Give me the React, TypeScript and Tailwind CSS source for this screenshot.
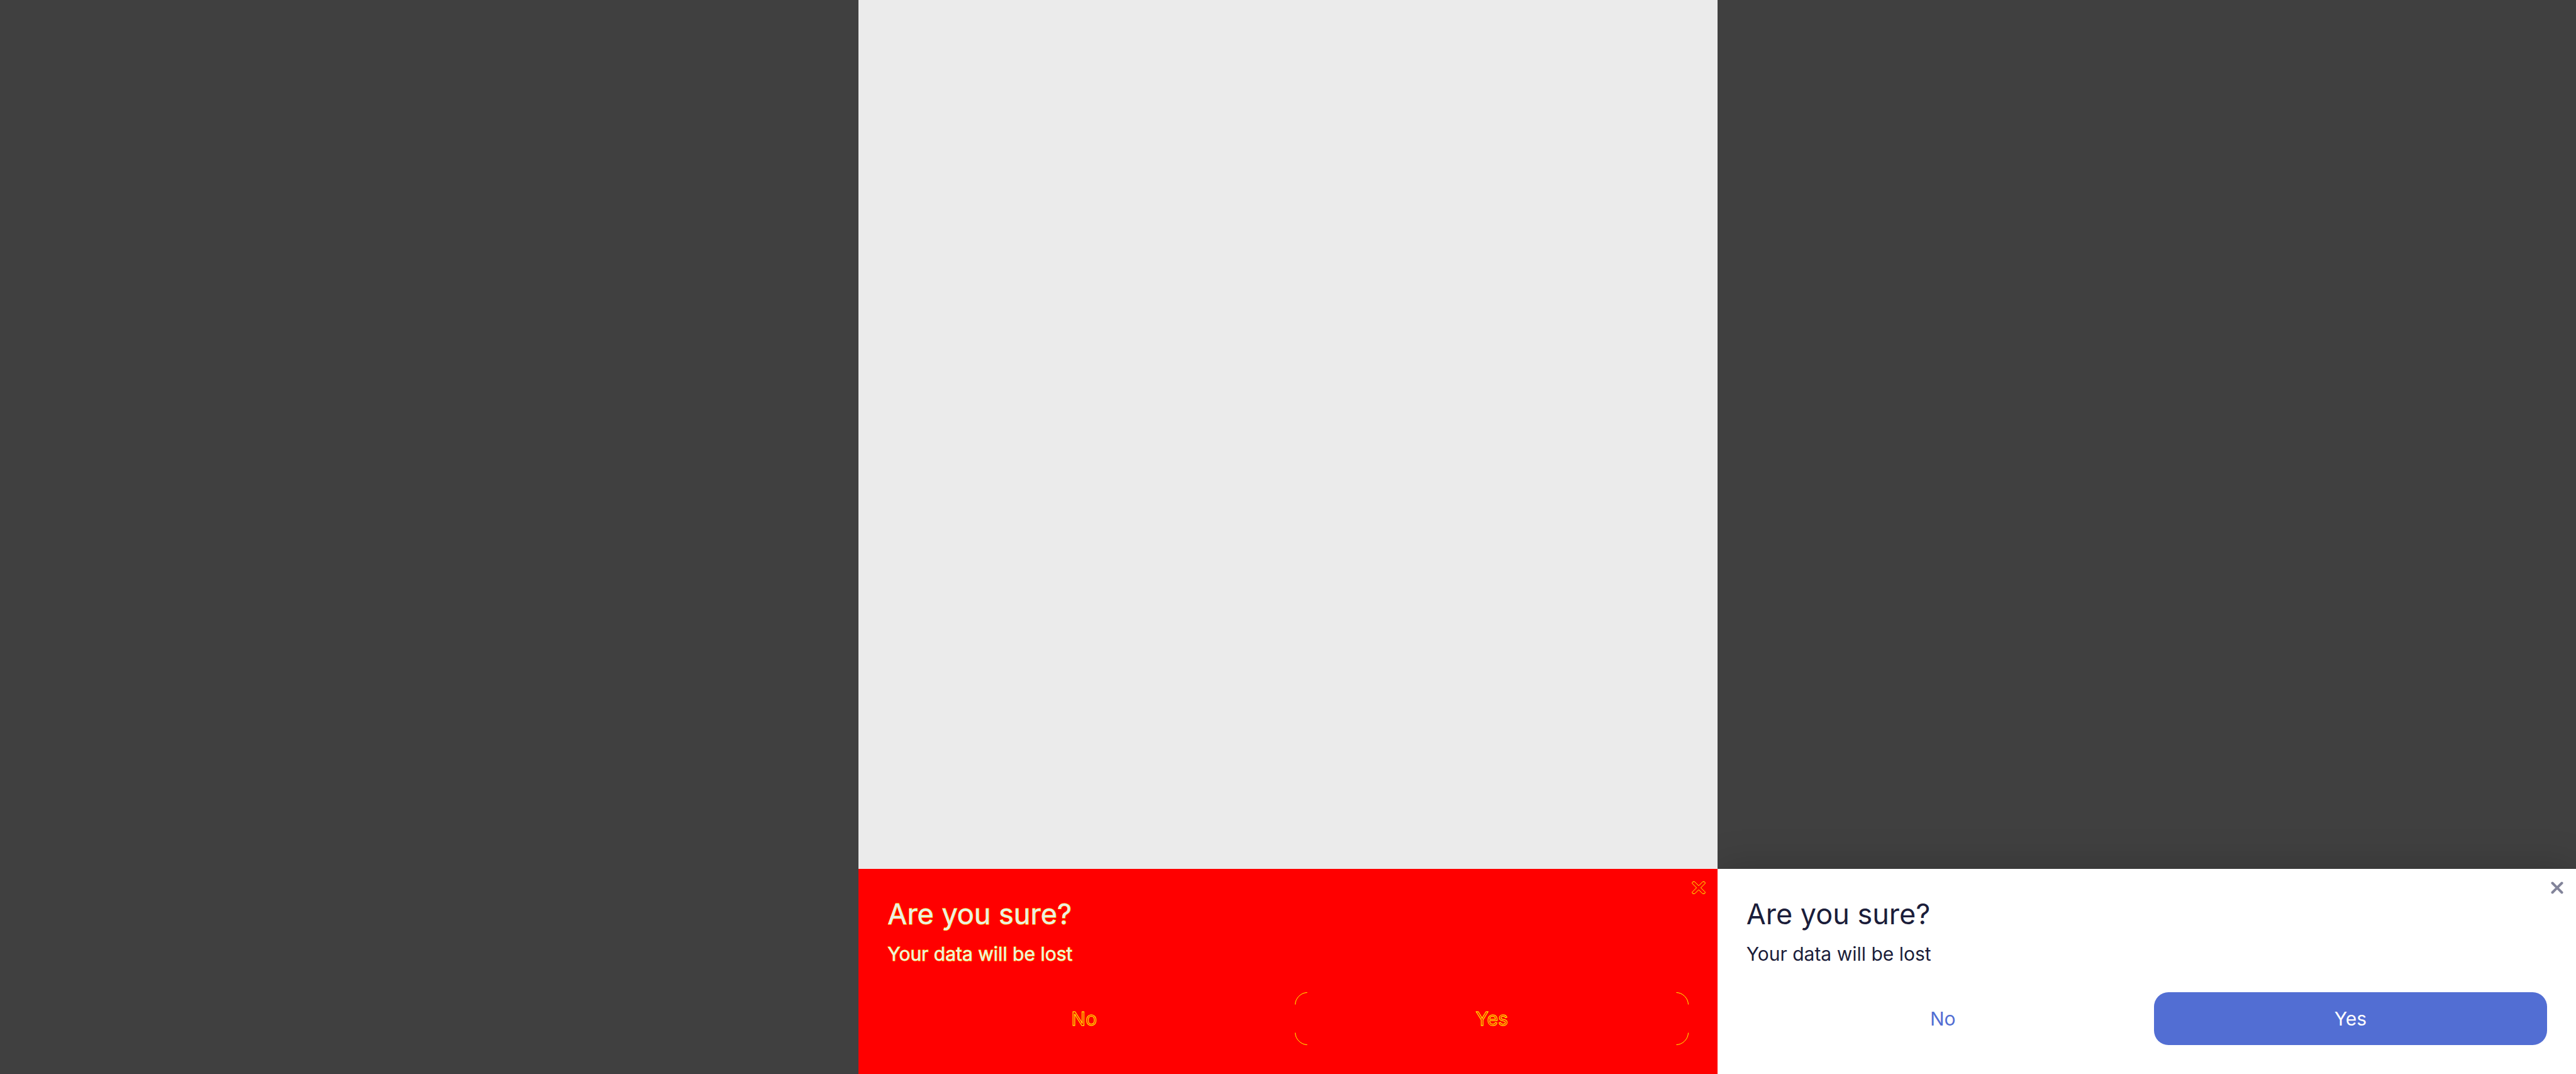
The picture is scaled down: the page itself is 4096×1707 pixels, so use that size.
type IconProps = { className: string; outlined?: boolean };

function CrossIcon({ className, outlined = false }: IconProps) {
  if (outlined) {
    return (
      <svg viewBox="0 0 24 24" className={className} fill="none" stroke="currentColor" strokeWidth="1" strokeLinejoin="round" aria-hidden="true">
        <path d="M12 8.8 L18.3 2.5 H21 L22.2 3.5 V5.2 L15.4 12 L22.2 18.8 V20.5 L21 21.5 H18.3 L12 15.2 L5.7 21.5 H3 L1.8 20.5 V18.8 L8.6 12 L1.8 5.2 V3.5 L3 2.5 H5.7 Z" />
      </svg>
    );
  }
  return (
    <svg viewBox="0 0 24 24" className={className} fill="none" stroke="currentColor" strokeWidth="4" strokeLinecap="round" aria-hidden="true">
      <path d="M4.5 4.5 L19.5 19.5 M19.5 4.5 L4.5 19.5" />
    </svg>
  );
}

function Corner({ className }: { className: string }) {
  return (
    <svg viewBox="0 0 24 24" className={`absolute size-6 ${className}`} fill="none" stroke="#ffff00" strokeWidth="1" aria-hidden="true">
      <path d="M0.5 19.5 A20 20 0 0 1 19.5 0.5" />
    </svg>
  );
}

function Dialog({ diff = false }: { diff?: boolean }) {
  return (
    <section
      role="dialog"
      aria-label="Are you sure?"
      className={
        diff
          ? "relative bg-[#ff0000] px-[46px] py-[46px] text-[#ebebeb]"
          : "relative bg-white px-[46px] py-[46px] text-[#1b1d3a] shadow-[0_0_60px_rgba(0,0,0,0.2)]"
      }
    >
      <button type="button" aria-label="Close" className="absolute top-[18px] right-[18px] flex size-6 items-center justify-center">
        <CrossIcon outlined={diff} className={diff ? "size-6 text-[#ffff00]" : "size-6 text-[#82849a]"} />
      </button>
      <h2
        className={
          diff
            ? "text-[45px] leading-[52px] [paint-order:stroke] [-webkit-text-stroke:1px_#ffff00]"
            : "text-[45px] leading-[52px]"
        }
      >
        Are you sure?
      </h2>
      <p
        className={
          diff
            ? "mt-[14px] text-[30px] leading-[46px] [paint-order:stroke] [-webkit-text-stroke:1px_#ffff00]"
            : "mt-[14px] text-[30px] leading-[46px]"
        }
      >
        Your data will be lost
      </p>
      <div className="mt-[38px] grid grid-cols-2 gap-[23px] text-[30px] leading-[36px]">
        <button
          type="button"
          className={
            diff
              ? "h-[84px] text-[#ff0000] [-webkit-text-stroke:1px_#ffff00]"
              : "h-[84px] text-[#526ed3]"
          }
        >
          No
        </button>
        <button
          type="button"
          className={
            diff
              ? "relative h-[84px] text-[#ff0000] [-webkit-text-stroke:1px_#ffff00]"
              : "h-[84px] rounded-[23px] bg-[#526ed3] text-white"
          }
        >
          Yes
          {diff && (
            <>
              <Corner className="top-0 left-0" />
              <Corner className="top-0 right-0 rotate-90" />
              <Corner className="right-0 bottom-0 rotate-180" />
              <Corner className="bottom-0 left-0 -rotate-90" />
            </>
          )}
        </button>
      </div>
    </section>
  );
}

export default function App() {
  return (
    <main className="grid h-screen grid-cols-3 overflow-hidden font-['Inter','Liberation_Sans',sans-serif]">
      <div className="border-b border-[#403c40] bg-[#404040]" />
      <div className="flex flex-col justify-end overflow-hidden bg-[#ebebeb]">
        <Dialog diff />
      </div>
      <div className="flex flex-col justify-end overflow-hidden bg-[#404040]">
        <Dialog />
      </div>
    </main>
  );
}
